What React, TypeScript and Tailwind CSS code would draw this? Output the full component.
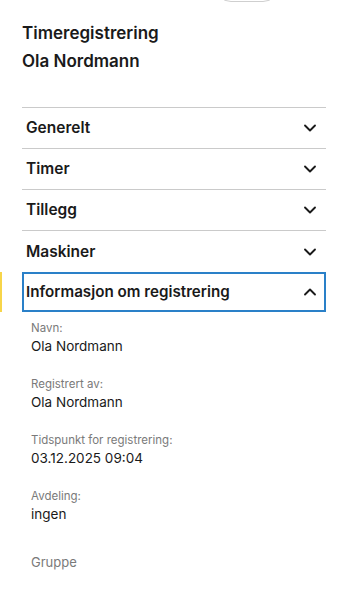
import React from 'react';
import { ChevronDown, ChevronUp } from 'lucide-react';

const sections = ['Generelt', 'Timer', 'Tillegg', 'Maskiner'];

const info = [
  { label: 'Navn:', value: 'Ola Nordmann' },
  { label: 'Registrert av:', value: 'Ola Nordmann' },
  { label: 'Tidspunkt for registrering:', value: '03.12.2025 09:04' },
  { label: 'Avdeling:', value: 'ingen' },
];

export default function App() {
  return (
    <div className="min-h-[600px] bg-white text-[#1a1a1a]" style={{ fontFamily: 'Inter, "Noto Sans", sans-serif' }}>
      {/* top pill, scrolled mostly out of view */}
      <div className="ml-[215px] -mt-[30px] h-[32px] w-[64px] rounded-full border border-[#cfcfcf]" />

      <div className="ml-[22px] w-[304px]">
        <div className="pt-[17px] text-[17px] font-semibold leading-[28px]">
          <div>Timeregistrering</div>
          <div>Ola Nordmann</div>
        </div>

        <div className="mt-[32px] border-t border-[#cacaca]">
          {sections.map((s) => (
            <div key={s} className="flex h-[41px] items-center justify-between border-b border-[#cacaca] pl-[4px] pr-[6px] last:border-b-0">
              <span className="text-[15.5px] font-semibold">{s}</span>
              <ChevronDown size={20} strokeWidth={2.25} className="text-[#1a1a1a]" />
            </div>
          ))}
        </div>

        <div className="relative">
          <div className="absolute -left-[22px] top-0 h-[40px] w-[2px] bg-[#f7d54a]" />
          <div className="flex h-[40px] items-center justify-between border-2 border-[#2a80c8] pl-[2px] pr-[4px]">
            <span className="text-[15.2px] font-semibold">Informasjon om registrering</span>
            <ChevronUp size={20} strokeWidth={2.25} className="text-[#1a1a1a]" />
          </div>
        </div>

        <div className="pl-[9px] pt-[8px]">
          {info.map((i) => (
            <div key={i.label} className="mb-[20px]">
              <div className="text-[11.5px] leading-[16px] text-[#7a7a7a]">{i.label}</div>
              <div className="text-[13.5px] leading-[20px]">{i.value}</div>
            </div>
          ))}
          <div className="pt-[8px] text-[13px] leading-[20px] text-[#7a7a7a]">Gruppe</div>
        </div>
      </div>
    </div>
  );
}
